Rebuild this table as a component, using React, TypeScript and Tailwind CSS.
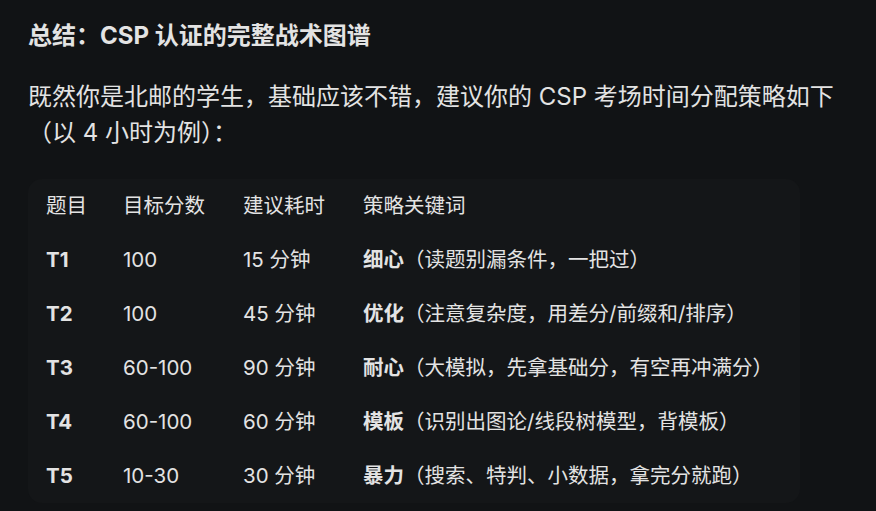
const rows = [
	{ id: "T1", score: "100", time: "15 分钟", key: "细心", note: "（读题别漏条件，一把过）" },
	{ id: "T2", score: "100", time: "45 分钟", key: "优化", note: "（注意复杂度，用差分/前缀和/排序）" },
	{ id: "T3", score: "60-100", time: "90 分钟", key: "耐心", note: "（大模拟，先拿基础分，有空再冲满分）" },
	{ id: "T4", score: "60-100", time: "60 分钟", key: "模板", note: "（识别出图论/线段树模型，背模板）" },
	{ id: "T5", score: "10-30", time: "30 分钟", key: "暴力", note: "（搜索、特判、小数据，拿完分就跑）" },
];

export default function App() {
	return (
		<div className="min-h-[511px] w-[876px] overflow-hidden bg-[#111315] text-[#e3e3e3] font-['Inter','Noto_Sans_CJK_SC',sans-serif]">
			<div className="pl-[28px] pt-[18px]">
				<h1 className="text-[24px] leading-[36px] font-bold">总结：CSP 认证的完整战术图谱</h1>
				<p className="mt-[25px] text-[24px] leading-[36px] pr-[40px]">
					既然你是北邮的学生，基础应该不错，建议你的 CSP 考场时间分配策略如下（以 4 小时为例）：
				</p>
			</div>
			<div className="ml-[28px] mt-[28px] w-[772px] rounded-[14px] bg-[#141618] pl-[18px]">
				<div className="grid grid-cols-[77px_120px_120px_1fr] h-[54px] items-center text-[20.5px]">
					<div>题目</div>
					<div>目标分数</div>
					<div>建议耗时</div>
					<div>策略关键词</div>
				</div>
				{rows.map((r) => (
					<div key={r.id} className="grid grid-cols-[77px_120px_120px_1fr] h-[54px] items-center text-[20.5px]">
						<div className="font-bold">{r.id}</div>
						<div>{r.score}</div>
						<div>{r.time}</div>
						<div>
							<span className="font-bold">{r.key}</span>
							{r.note}
						</div>
					</div>
				))}
			</div>
		</div>
	);
}
